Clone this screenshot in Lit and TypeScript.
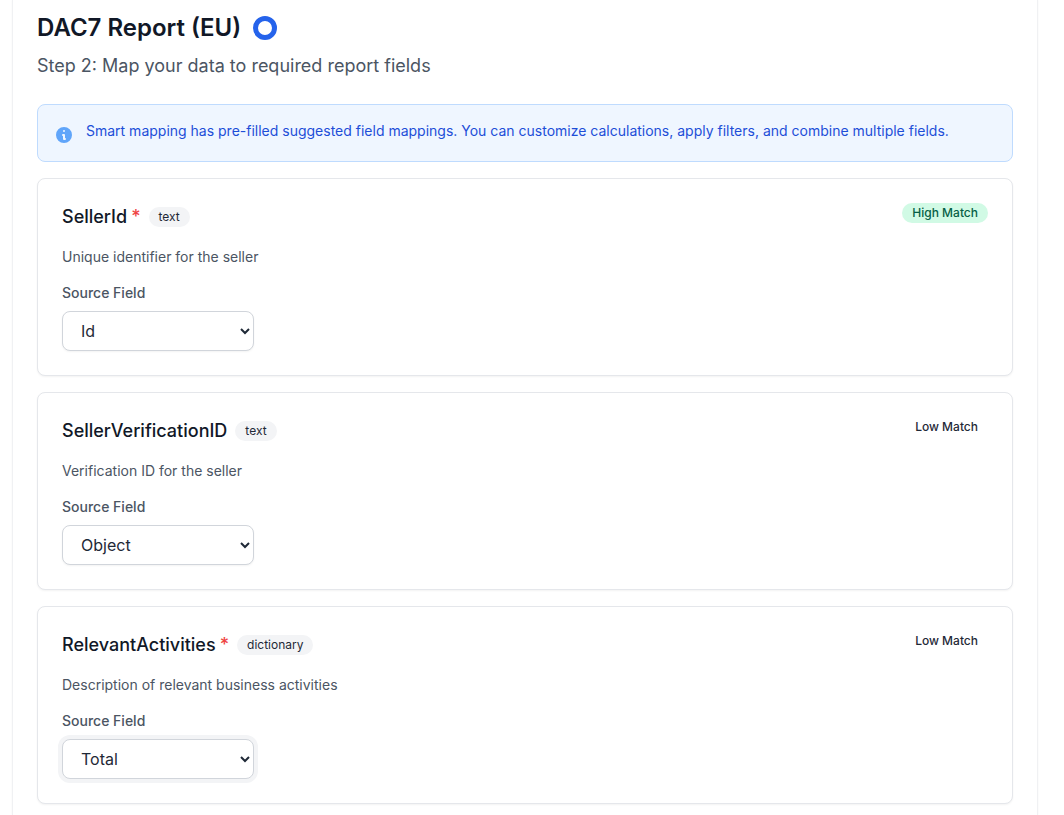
import { LitElement, html, css } from "lit";
import { customElement } from "lit/decorators.js";

interface FieldRow {
  name: string;
  required: boolean;
  type: string;
  desc: string;
  match: string;
  high: boolean;
  value: string;
  focused?: boolean;
}

const FIELDS: FieldRow[] = [
  { name: "SellerId", required: true, type: "text", desc: "Unique identifier for the seller", match: "High Match", high: true, value: "Id" },
  { name: "SellerVerificationID", required: false, type: "text", desc: "Verification ID for the seller", match: "Low Match", high: false, value: "Object" },
  { name: "RelevantActivities", required: true, type: "dictionary", desc: "Description of relevant business activities", match: "Low Match", high: false, value: "Total", focused: true },
];

@customElement("app-root")
export class AppRoot extends LitElement {
  static styles = css`
    :host {
      display: block;
      height: 815px;
      overflow: hidden;
      background: #ffffff;
      font-family: Inter, "Liberation Sans", sans-serif;
      color: #111827;
    }
    .panel {
      margin: 0 26px 0 12px;
      padding: 12px 24px 0;
      height: 815px;
      box-sizing: border-box;
      border-left: 1px solid #f0f1f3;
      border-right: 1px solid #f0f1f3;
      background: #fff;
      box-shadow: 0 0 2px rgba(0, 0, 0, 0.04);
    }
    .title-row {
      display: flex;
      align-items: center;
      gap: 12px;
      height: 32px;
    }
    h1 {
      margin: 0;
      font-size: 24px;
      line-height: 32px;
      font-weight: 600;
      color: #111827;
    }
    .spinner {
      width: 24px;
      height: 24px;
      box-sizing: border-box;
      border-radius: 50%;
      border: 5px solid #2563eb;
    }
    .step {
      margin: 8px 0 0;
      font-size: 18px;
      line-height: 28px;
      color: #4b5563;
    }
    .notice {
      margin-top: 24px;
      height: 58px;
      box-sizing: border-box;
      display: flex;
      align-items: flex-start;
      gap: 14px;
      padding: 16px 18px;
      background: #eff6ff;
      border: 1px solid #bfdbfe;
      border-radius: 8px;
      font-size: 14px;
      line-height: 20px;
      color: #1d4ed8;
    }
    .notice svg {
      flex: none;
      width: 16px;
      height: 16px;
      margin-top: 6px;
    }
    .cards {
      display: flex;
      flex-direction: column;
      gap: 16px;
      margin-top: 16px;
    }
    .card {
      box-sizing: border-box;
      height: 198px;
      padding: 24px;
      border: 1px solid #e5e7eb;
      border-radius: 8px;
      background: #fff;
      box-shadow: 0 1px 2px rgba(0, 0, 0, 0.05);
    }
    .head {
      display: flex;
      justify-content: space-between;
      align-items: flex-start;
    }
    .name-row {
      display: flex;
      align-items: center;
      gap: 8px;
      height: 28px;
    }
    .name {
      font-size: 18px;
      line-height: 28px;
      font-weight: 500;
      color: #111827;
    }
    .req {
      color: #ef4444;
      margin-left: 4px;
    }
    .tag {
      font-size: 12px;
      line-height: 20px;
      padding: 0 10px;
      border-radius: 10px;
      background: #f3f4f6;
      color: #1f2937;
    }
    .match {
      font-size: 12px;
      line-height: 20px;
      font-weight: 500;
      padding: 0 10px;
      border-radius: 10px;
      color: #1f2937;
    }
    .match.high {
      background: #d1fae5;
      color: #065f46;
    }
    .desc {
      margin: 14px 0 0;
      font-size: 14px;
      line-height: 24px;
      color: #4b5563;
    }
    label {
      display: block;
      margin-top: 14px;
      font-size: 14px;
      line-height: 20px;
      font-weight: 500;
      color: #4b5563;
    }
    select {
      display: block;
      margin-top: 8px;
      width: 192px;
      height: 40px;
      box-sizing: border-box;
      padding: 8px 2px 8px 14px;
      font-family: inherit;
      font-size: 16px;
      color: #1f2937;
      background: #fff;
      border: 1px solid #d1d5db;
      border-radius: 8px;
      box-shadow: 0 1px 2px rgba(0, 0, 0, 0.05);
    }
    select.focused {
      box-shadow: 0 0 0 4px #f3f4f6;
    }
  `;

  render() {
    return html`
      <div class="panel">
        <div class="title-row">
          <h1>DAC7 Report (EU)</h1>
          <div class="spinner"></div>
        </div>
        <p class="step">Step 2: Map your data to required report fields</p>
        <div class="notice">
          <svg viewBox="2 2 16 16" fill="#60a5fa">
            <path fill-rule="evenodd" clip-rule="evenodd" d="M18 10a8 8 0 1 1-16 0 8 8 0 0 1 16 0zm-7-4a1 1 0 1 1-2 0 1 1 0 0 1 2 0zM9 9a1 1 0 0 0 0 2v3a1 1 0 0 0 1 1h1a1 1 0 1 0 0-2v-3a1 1 0 0 0-1-1H9z"></path>
          </svg>
          <span>Smart mapping has pre-filled suggested field mappings. You can customize calculations, apply filters, and combine multiple fields.</span>
        </div>
        <div class="cards">
          ${FIELDS.map(
            (f) => html`
              <section class="card">
                <div class="head">
                  <div class="name-row">
                    <span class="name">${f.name}${f.required ? html`<span class="req">*</span>` : ""}</span>
                    <span class="tag">${f.type}</span>
                  </div>
                  <span class="match ${f.high ? "high" : ""}">${f.match}</span>
                </div>
                <p class="desc">${f.desc}</p>
                <label>Source Field</label>
                <select class=${f.focused ? "focused" : ""}>
                  <option>${f.value}</option>
                </select>
              </section>
            `
          )}
        </div>
      </div>
    `;
  }
}
